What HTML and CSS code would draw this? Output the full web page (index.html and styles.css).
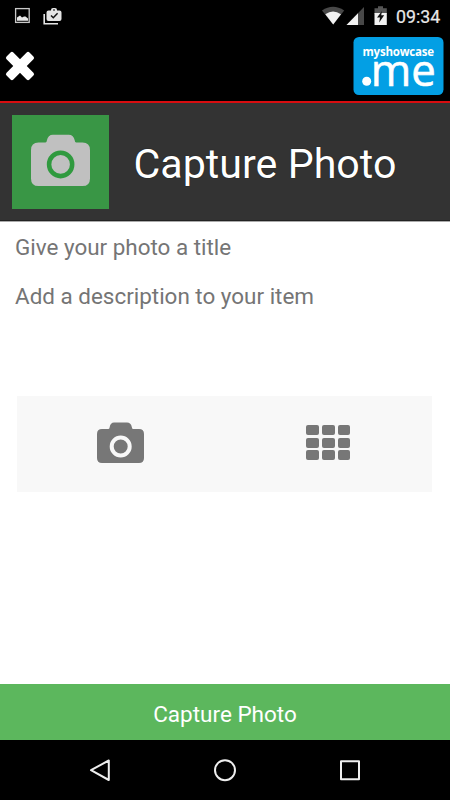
FILE: index.html
```html
<!DOCTYPE html>
<html lang="en">
<head>
<meta charset="utf-8">
<title>Capture Photo</title>
<link rel="stylesheet" href="styles.css">
</head>
<body>
<div class="screen">
  <div class="status">
    <svg class="notices" width="50" height="20" viewBox="14 6 50 20">
      <rect x="15.6" y="8.6" width="13.6" height="13.8" fill="none" stroke="#c9c9c9" stroke-width="1.3"/>
      <path d="M17 20.800V17.500l3-2 2 2 2-1 1.500 0 2.500 2v2.300z" fill="#e8e8e8"/>
      <path d="M44.200 14v9.800H58" fill="none" stroke="#e4e4e4" stroke-width="1.600"/>
      <path fill-rule="evenodd" d="M48.500 10.500H51V10q0-2 2-2h2q2 0 2 2v.5h2.500q2 0 2 2V19q0 2-2 2h-11q-2 0-2-2v-6.500q0-2 2-2zm4.500 0h2V9.500h-2z" fill="#e4e4e4"/>
      <path d="M51 15.500l2.300 2.300 4.300-4.500" fill="none" stroke="#111" stroke-width="1.500"/>
    </svg>
    <svg class="signals" width="66" height="20" viewBox="322 6 66 20">
      <path d="M322 10.500Q333 3 344.200 10.500L333.200 24.500z" fill="#484848"/>
      <path d="M325.300 14.300Q333 8.800 341 14.300L333.200 24.500z" fill="#f2f2f2"/>
      <path d="M364 7v18h-17.500z" fill="#484848"/>
      <path d="M358 13.200V25h-11.500z" fill="#f2f2f2"/>
      <path d="M374.500 8.200h3.500V6.200h5v2h3.800V14h-12.300z" fill="#555"/>
      <path d="M374.500 13h12.300V25h-12.300z" fill="#f2f2f2"/>
      <path d="M382 11l-5 6.500h3l-.8 5 5-7.200h-3z" fill="#111"/>
    </svg>
    <span class="time">09:34</span>
  </div>
  <div class="topbar">
    <svg width="28" height="28" viewBox="-14 -14 28 28">
      <g fill="#fff" transform="rotate(45)">
        <rect x="-16.200" y="-4.800" width="32.400" height="9.600" rx="2"/>
        <rect x="-4.800" y="-16.200" width="9.600" height="32.400" rx="2"/>
      </g>
    </svg>
    <svg class="logo" width="91" height="58" viewBox="0 0 91 58">
      <rect x=".5" width="90" height="58" rx="5.500" fill="#039fe4"/>
      <text class="logo-name" x="9.500" y="18.500" textLength="71.500">myshowcase</text>
      <circle cx="13.700" cy="44.300" r="4.500" fill="#fff"/>
      <text class="logo-me" x="17.800" y="48.500" textLength="65" lengthAdjust="spacingAndGlyphs">me</text>
    </svg>
  </div>
  <header class="header">
    <div class="tile">
      <svg width="59" height="52" viewBox="0 0 47 41" preserveAspectRatio="none">
        <path class="tile-camera" d="M6 6.800H11.500Q12.500 6.800 12.700 5Q13.500 .5 17.500 .5H30Q34 .5 34.800 5Q35 6.800 36 6.800H41Q47 6.800 47 12.800V35Q47 41 41 41H6Q0 41 0 35V12.800Q0 6.800 6 6.800z"/>
        <circle cx="23.600" cy="24" r="9.200" fill="none" stroke="#309a3f" stroke-width="3.600"/>
      </svg>
    </div>
    <h1>Capture Photo</h1>
  </header>
  <main class="form">
    <p>Give your photo a title</p>
    <p>Add a description to your item</p>
    <div class="picker">
      <div class="choice">
        <svg width="47" height="41" viewBox="0 0 47 41">
          <path fill="#777" d="M5 7H11.500Q12.500 7 12.700 5Q13.500 .5 17 .5H30Q34 .5 34.800 5Q35 7 36 7H42Q47 7 47 12V36Q47 41 42 41H5Q0 41 0 36V12Q0 7 5 7z"/>
          <circle cx="23.700" cy="24.500" r="9" fill="none" stroke="#f8f8f8" stroke-width="4"/>
        </svg>
      </div>
      <div class="choice">
        <div class="grid"><i></i><i></i><i></i><i></i><i></i><i></i><i></i><i></i><i></i></div>
      </div>
    </div>
  </main>
  <div class="action">Capture Photo</div>
  <nav class="nav">
    <svg width="24" height="26" viewBox="0 0 24 26"><path d="M20.800 3.500V23L3 13.200z"/></svg>
    <svg width="24" height="26" viewBox="0 0 24 26"><circle cx="12" cy="13.200" r="10"/></svg>
    <svg width="24" height="26" viewBox="0 0 24 26"><rect x="3" y="4.200" width="18" height="18"/></svg>
  </nav>
</div>
</body>
</html>
```
FILE: styles.css
```css
* { box-sizing: border-box; }
body { margin: 0; font-family: Roboto, "Liberation Sans", sans-serif; background: #fff; }
svg { display: block; flex: none; }
.screen { width: 450px; height: 800px; display: flex; flex-direction: column; overflow: hidden; }
.status { height: 32px; background: #000; display: flex; align-items: center; padding: 0 10px 0 14px; }
.signals { margin-left: auto; }
.time { width: 44px; margin-left: 8px; color: #e8e8e8; font-size: 17.8px; line-height: 32px; padding-top: 1px; white-space: nowrap; -webkit-text-stroke: .2px #e8e8e8; }
.topbar { height: 71px; background: #000; border-bottom: 2px solid #d80d10; display: flex; align-items: center; justify-content: space-between; padding: 0 6px 2px; }
.topbar svg { overflow: visible; }
.logo text { fill: #fff; font-family: "Open Sans", sans-serif; }
.logo .logo-name { font-size: 11.5px; font-weight: 700; }
.logo .logo-me { font-size: 44px; font-weight: 400; stroke: #fff; stroke-width: .6px; }
.header { height: 118px; background: #333; border-bottom: 1px solid #222; display: flex; align-items: center; padding: 0 12px; }
.tile { width: 97px; height: 94px; background: #399645; display: flex; align-items: center; justify-content: center; padding-bottom: 4px; }
.tile-camera { fill: #c0c0c0; }
h1 { margin: 4px 0 0 24.5px; color: #fff; font-size: 41.2px; font-weight: 400; line-height: 48px; white-space: nowrap; text-shadow: 0 0 1px #000; }
.form { flex: 1; background: #fff; padding: 13px 18px 0 17px; border-top: 1px solid #aaa; }
.form p { margin: 0 0 23px -2px; color: #757575; font-size: 22.45px; line-height: 26px; white-space: nowrap; }
.form p:first-child { margin-top: -1px; }
.picker { margin-top: 87px; height: 96px; background: #f8f8f8; display: flex; }
.choice { flex: 1; display: flex; align-items: center; justify-content: center; padding-bottom: 3px; }
.grid { display: grid; grid-template-columns: repeat(3, 12.5px); grid-template-rows: repeat(3, 10px); gap: 2.5px 3.2px; }
.grid i { background: #777; border-radius: 2px; }
.action { height: 56px; background: #5cb75d; color: #fff; font-size: 22.5px; line-height: 61px; text-align: center; }
.nav { height: 60px; background: #000; display: flex; align-items: center; justify-content: space-between; padding: 0 88px; }
.nav svg { fill: none; stroke: #eee; stroke-width: 2; stroke-linejoin: round; }
```
